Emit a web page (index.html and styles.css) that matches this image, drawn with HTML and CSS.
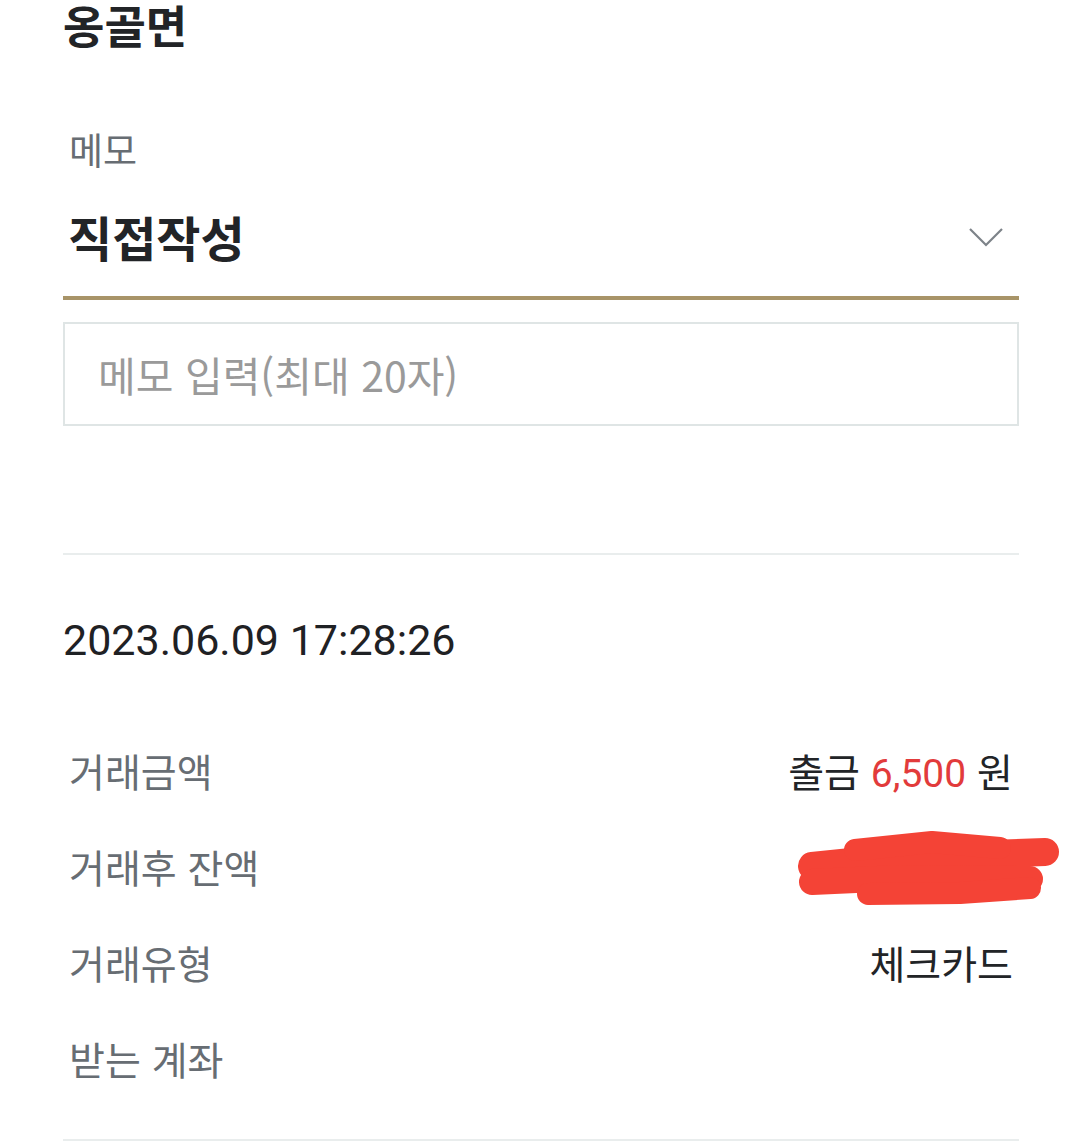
FILE: index.html
```html
<!DOCTYPE html>
<html lang="ko">
<head>
<meta charset="utf-8">
<link rel="stylesheet" href="styles.css">
</head>
<body>
<div class="page">
  <h1 class="title">옹골면</h1>
  <div class="memo-label">메모</div>
  <div class="select">
    <span class="select-value">직접작성</span>
    <svg class="chevron" width="36" height="22" viewBox="0 0 36 22"><path d="M2 3 L18 19 L34 3" fill="none" stroke="#7d8389" stroke-width="2.2"/></svg>
  </div>
  <div class="memo-input">메모 입력(최대 20자)</div>
  <div class="divider"></div>
  <div class="date">2023.06.09 17:28:26</div>
  <div class="rows">
    <div class="row"><span class="label">거래금액</span><span class="value">출금 <span class="amount">6,500</span> 원</span></div>
    <div class="row"><span class="label">거래후 잔액</span><span class="value"></span></div>
    <div class="row"><span class="label">거래유형</span><span class="value">체크카드</span></div>
    <div class="row"><span class="label">받는 계좌</span><span class="value"></span></div>
  </div>
  <div class="bottom-line"></div>
</div>
<svg class="scribble" width="280" height="100" viewBox="785 820 280 100">
  <g stroke="#f44336" stroke-linecap="round" stroke-linejoin="round" fill="none">
    <path d="M812 866 L900 857 L1045 852" stroke-width="28"/>
    <path d="M855 850 L932 842 L1000 848" stroke-width="22"/>
    <path d="M812 882 L900 878 L1030 879" stroke-width="26"/>
    <path d="M868 894 L960 893 L1030 888" stroke-width="22"/>
  </g>
</svg>
</body>
</html>
```

FILE: styles.css
```css
html, body {
  margin: 0;
  padding: 0;
  background: #ffffff;
}
body {
  position: relative;
  width: 1080px;
  height: 1147px;
  overflow: hidden;
  font-family: "Noto Sans CJK KR", "Noto Sans", sans-serif;
  color: #222222;
}
.page {
  padding: 0 61px 0 63px;
}
.title {
  margin: 0;
  padding-top: 1px;
  font-size: 45px;
  line-height: 48px;
  height: 47px;
  font-weight: 700;
  color: #222427;
}
.memo-label {
  margin-top: 77px;
  font-size: 37px;
  line-height: 48px;
  color: #676d73;
  padding-left: 6px;
}
.select {
  margin-top: 33px;
  height: 60px;
  padding-bottom: 30px;
  border-bottom: 4px solid #a89468;
  display: flex;
  align-items: center;
  justify-content: space-between;
}
.select-value {
  font-size: 48px;
  line-height: 60px;
  font-weight: 700;
  color: #222427;
  padding-left: 5px;
}
.chevron {
  margin-right: 15px;
  margin-top: 2px;
}
.memo-input {
  margin-top: 22px;
  height: 100px;
  border: 2px solid #dfe5e5;
  display: flex;
  align-items: center;
  padding-left: 33px;
  font-size: 41px;
  color: #9a9a9a;
  box-sizing: content-box;
}
.divider {
  margin-top: 127px;
  height: 2px;
  background: #e9eded;
}
.date {
  margin-top: 60px;
  font-family: Roboto, "Liberation Sans", sans-serif;
  font-size: 43px;
  line-height: 50px;
  color: #1f2124;
}
.rows {
  margin-top: 57px;
}
.row {
  height: 96px;
  display: flex;
  align-items: center;
  justify-content: space-between;
  font-size: 39px;
}
.label {
  color: #676d73;
  padding-left: 6px;
}
.value {
  color: #222427;
  padding-right: 6px;
}
.amount {
  color: #e23b3b;
  font-family: Roboto, "Noto Sans CJK KR", sans-serif;
}
.bottom-line {
  margin-top: 33px;
  height: 2px;
  background: #e9eded;
}
.scribble {
  position: absolute;
  left: 785px;
  top: 820px;
}
```
